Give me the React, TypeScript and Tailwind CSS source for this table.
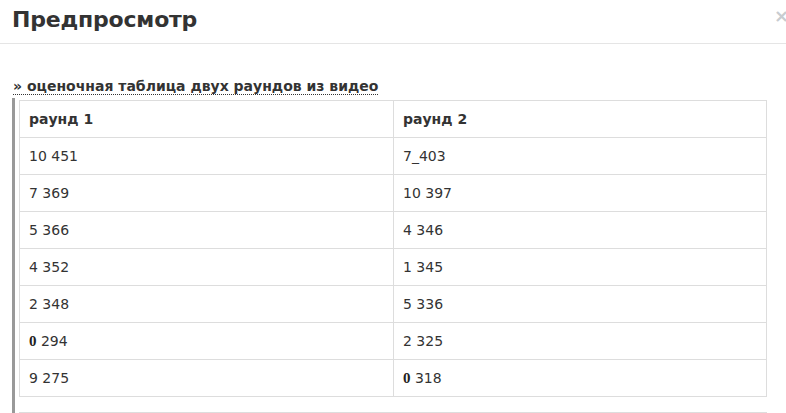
import React from "react";

const Zero = () => (
  <b className="font-bold text-[15px] text-[#222] font-['Liberation_Serif',serif]">0</b>
);

const rows: [React.ReactNode, React.ReactNode][] = [
  ["10 451", "7_403"],
  ["7 369", "10 397"],
  ["5 366", "4 346"],
  ["4 352", "1 345"],
  ["2 348", "5 336"],
  [<><Zero /> 294</>, "2 325"],
  ["9 275", <><Zero /> 318</>],
];

export default function App() {
  return (
    <div className="w-[786px] h-[413px] overflow-hidden bg-white relative font-['DejaVu_Sans',sans-serif] text-[#333]">
      <div className="h-[44px] border-b border-[#e5e5e5] pl-[12px] pt-[4px]">
        <h1 className="text-[22px] font-bold leading-[32px] text-[#333] tracking-[-0.2px]">Предпросмотр</h1>
      </div>
      <span className="absolute right-[-3px] top-[7px] text-[18px] font-bold text-[#c8ccd0] leading-none">×</span>
      <div className="pt-[30px] pl-[13px] h-[50px]">
        <span className="inline-block text-[14px] font-bold leading-[16px] border-b border-dotted border-[#333] text-[#333]">
          » оценочная таблица двух раундов из видео
        </span>
      </div>
      <div className="ml-[12px] mt-[4px] border-l-[3px] border-[#999] pl-[4px] pt-[2px] w-[756px]">
        <table className="w-[748px] border-collapse text-[14px] text-[#333]">
          <thead>
            <tr className="h-[37px]">
              <th className="border border-[#ddd] text-left font-bold pl-[9px] w-[374px]">раунд 1</th>
              <th className="border border-[#ddd] text-left font-bold pl-[9px]">раунд 2</th>
            </tr>
          </thead>
          <tbody>
            {rows.map((r, i) => (
              <tr key={i} className="h-[37px]">
                <td className="border border-[#ddd] pl-[9px]">{r[0]}</td>
                <td className="border border-[#ddd] pl-[9px]">{r[1]}</td>
              </tr>
            ))}
          </tbody>
        </table>
        <div className="mt-[15px] border-t border-[#ddd] w-[748px] h-[10px]" />
      </div>
    </div>
  );
}
